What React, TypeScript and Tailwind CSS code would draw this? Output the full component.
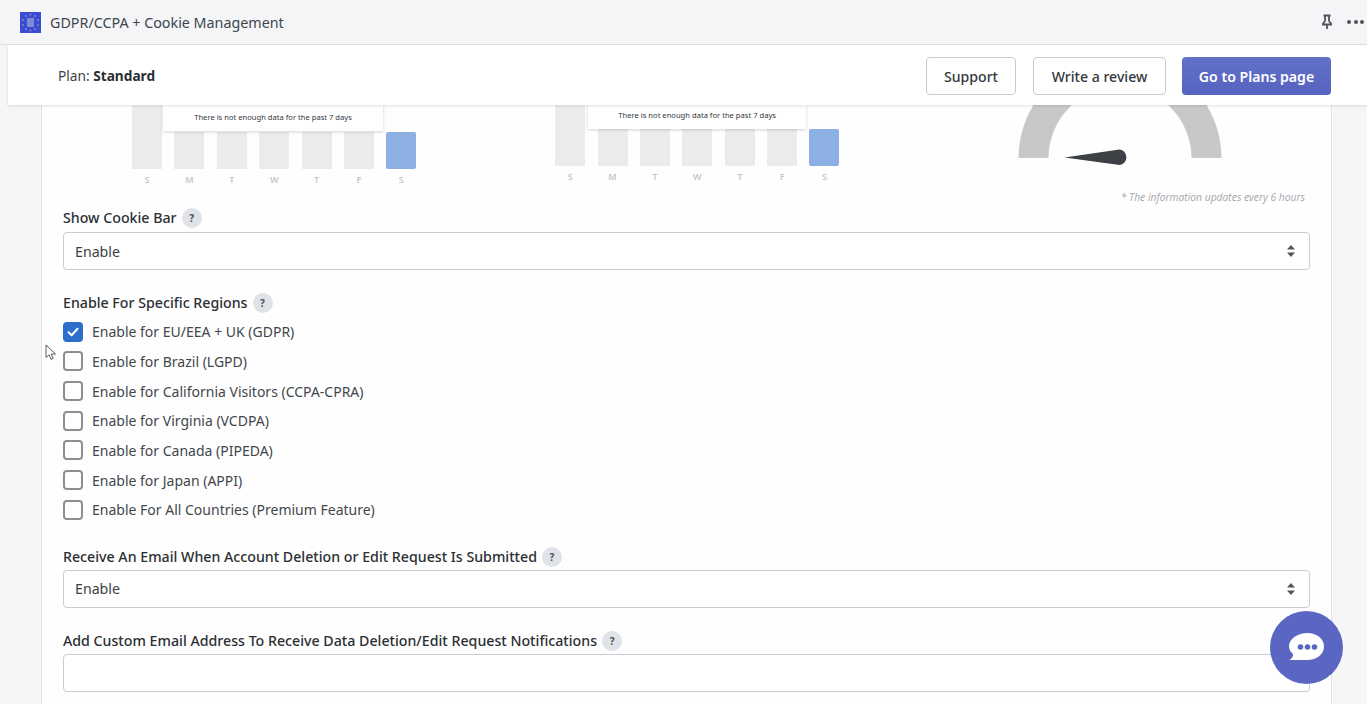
import React from "react";

const Help = () => (
  <span className="ml-[5px] flex h-[20px] w-[20px] items-center justify-center rounded-full bg-[#dfe3e8] text-[10px] font-bold leading-none text-[#454f5b]">?</span>
);

const Label = ({ children }: { children: React.ReactNode }) => (
  <div className="flex h-[20px] items-center text-[14.2px] font-medium text-[#2b2f33]">
    <span>{children}</span>
    <Help />
  </div>
);

const Arrows = () => (
  <svg width="8" height="12" viewBox="0 0 8 12" className="text-[#50555a]" fill="currentColor">
    <path d="M4 0 8 4.6H0z" />
    <path d="M4 12 0 7.4h8z" />
  </svg>
);

const Select = () => (
  <div className="flex h-[38px] items-center justify-between rounded-[4px] border border-[#c9ccd6] bg-white pl-[11px] pr-[14px] text-[14.2px] text-[#3a3f44]">
    <span className="pt-[1px]">Enable</span>
    <Arrows />
  </div>
);

const Check = ({ label, on }: { label: string; on?: boolean }) => (
  <div className="flex h-[29.67px] items-center text-[14px] text-[#42474c]">
    {on ? (
      <span className="flex h-[20px] w-[20px] items-center justify-center rounded-[4px] bg-[#2c6ecb]">
        <svg width="12" height="10" viewBox="0 0 12 10" fill="none" stroke="#fff" strokeWidth="2" strokeLinecap="round" strokeLinejoin="round">
          <path d="M1.5 5.2 4.6 8.2 10.5 1.8" />
        </svg>
      </span>
    ) : (
      <span className="h-[20px] w-[20px] rounded-[4px] border-2 border-[#8a8f94] bg-white" />
    )}
    <span className="ml-[9px]">{label}</span>
  </div>
);

const days = ["S", "M", "T", "W", "T", "F", "S"];

const Chart = ({ h, tip, shift }: { h: number; tip: string; shift: string }) => (
  <div className={`relative flex gap-[12.4px] ${shift}`}>
    {days.map((d, i) => (
      <div key={i} className="flex w-[30px] flex-col items-center">
        <div className="flex w-full flex-col justify-end" style={{ height: h }}>
          <div
            className={i === 6 ? "rounded-[2px] bg-[#8db0e4]" : "bg-[#ebebeb]"}
            style={{ height: i === 0 ? h : 37 }}
          />
        </div>
        <span className="mt-[6px] text-[9px] font-semibold leading-[10px] text-[#c6c6c6]">{d}</span>
      </div>
    ))}
    <div className={`absolute top-0 bg-white text-center text-[7.6px] text-[#33383d] shadow-[0_1px_3px_rgba(0,0,0,0.18)] ${tip}`}>
      There is not enough data for the past 7 days
    </div>
  </div>
);

const Gauge = () => (
  <svg width="204" height="62" viewBox="0 0 204 62" className="ml-[179px] block">
    <path d="M0.5 53A101.5 101.5 0 0 1 203.500 53H173.500A71.500 71.500 0 0 0 30.500 53z" fill="#c8c8c8" />
    <path d="M46.500 52.500 101.500 44.500A7.800 7.800 0 0 1 101.500 60z" fill="#3d4145" />
  </svg>
);

export default function App() {
  return (
    <div
      className="relative flex h-[704px] w-[1367px] flex-col overflow-hidden bg-[#f6f6f7]"
      style={{ fontFamily: '"Noto Sans", "Open Sans", sans-serif' }}
    >
      <header className="flex h-[45px] shrink-0 items-center border-b border-[#dfe1e5] bg-[#f5f5f7] pl-[20px] pr-[3px]">
        <svg width="21" height="21" viewBox="0 0 21 21">
          <rect width="21" height="21" fill="#3a4bd6" />
          <rect x="7" y="6" width="7" height="9" fill="#7f8bd6" />
          {[[10.5, 2.5], [15, 4], [18, 8], [18, 13], [15, 17], [10.5, 18.5], [6, 17], [3, 13], [3, 8], [6, 4]].map(([x, y], i) => (
            <circle key={i} cx={x} cy={y} r="0.9" fill="#8d8fb0" />
          ))}
        </svg>
        <span className="ml-[9px] pt-[1px] text-[14.3px] text-[#3c4650]">GDPR/CCPA + Cookie Management</span>
        <svg width="12" height="16" viewBox="0 0 12 16" fill="none" stroke="#50555a" strokeWidth="1.8" className="ml-auto">
          <path d="M2.500 1.500h7M4 1.500v5.500L2 9.500v1h8v-1L8 7V1.500M6 10.500V15" />
        </svg>
        <div className="ml-[14px] flex w-[17px] justify-between">
          <span className="h-[4px] w-[4px] rounded-full bg-[#50555a]" />
          <span className="h-[4px] w-[4px] rounded-full bg-[#50555a]" />
          <span className="h-[4px] w-[4px] rounded-full bg-[#50555a]" />
        </div>
      </header>

      <div className="relative z-10 ml-[8px] flex h-[60px] shrink-0 items-center bg-white pl-[50px] pr-[36px] pt-[2px] shadow-[0_1px_3px_rgba(0,0,0,0.12)]">
        <div className="pt-[1px] text-[13.7px] text-[#3f4448]">
          Plan: <b className="font-bold text-[#2b2f33]">Standard</b>
        </div>
        <div className="ml-auto flex h-[38px] items-stretch text-[14.1px] font-medium">
          <button className="w-[90px] rounded-[4px] border border-[#c4cdd5] bg-white pt-[1px] text-[#33383d]">Support</button>
          <button className="ml-[17px] w-[133px] rounded-[4px] border border-[#c4cdd5] bg-white pt-[1px] text-[#33383d]">Write a review</button>
          <button className="ml-[16px] w-[149px] rounded-[4px] bg-gradient-to-b from-[#6371c7] to-[#5563c1] pt-[1px] font-semibold text-white">Go to Plans page</button>
        </div>
      </div>

      <main className="ml-[41px] w-[1291px] flex-1 overflow-hidden border-x border-[#e3e4e9] bg-[#fefefe]">
        <div className="flex h-[85px] items-start overflow-hidden">
          <Chart h={64} tip="left-[31px] h-[26px] w-[220px] leading-[24px]" shift="ml-[90px]" />
          <Chart h={61} tip="left-[33px] h-[24px] w-[218px] leading-[20px]" shift="ml-[138.800px]" />
          <Gauge />
        </div>
        <div className="h-[14px] pr-[26px] text-right text-[10.3px] italic leading-[14px] text-[#a4a7ac]" style={{ fontFamily: '"Open Sans", sans-serif' }}>
          * The information updates every 6 hours
        </div>

        <div className="mt-[4px] px-[21px]">
          <Label>Show Cookie Bar</Label>
          <div className="mt-[4px]"><Select /></div>

          <div className="mt-[23px]"><Label>Enable For Specific Regions</Label></div>
          <div className="mt-[4px]">
            <Check on label="Enable for EU/EEA + UK (GDPR)" />
            <Check label="Enable for Brazil (LGPD)" />
            <Check label="Enable for California Visitors (CCPA-CPRA)" />
            <Check label="Enable for Virginia (VCDPA)" />
            <Check label="Enable for Canada (PIPEDA)" />
            <Check label="Enable for Japan (APPI)" />
            <Check label="Enable For All Countries (Premium Feature)" />
          </div>

          <div className="mt-[22px]"><Label>Receive An Email When Account Deletion or Edit Request Is Submitted</Label></div>
          <div className="mt-[3px]"><Select /></div>

          <div className="mt-[23px]"><Label>Add Custom Email Address To Receive Data Deletion/Edit Request Notifications</Label></div>
          <div className="mt-[3px] h-[38px] rounded-[4px] border border-[#c9ccd6] bg-white" />
        </div>
      </main>

      <svg width="14" height="18" viewBox="0 0 14 18" className="absolute left-[45px] top-[344px]" fill="#fff" stroke="#55595e" strokeWidth="1">
        <path d="M1 1v12.500l3-2.700 2 4.600 2.200-1-2-4.400h4.300z" />
      </svg>

      <div className="absolute left-[1270px] top-[611px] flex h-[73px] w-[73px] items-center justify-center rounded-full bg-[#5b66c2]">
        <svg width="35" height="30" viewBox="0 0 35 30" className="mt-[1px]">
          <path d="M18.500 0C27.500 0 35 5.500 35 13.500S27.500 27 18.500 27H0.500C3 25.500 4.500 23 4 21 1.500 18.500 0 16.500 0 13.500 0 5.500 9 0 18.500 0z" fill="#fff" />
          <circle cx="11.500" cy="14" r="2.800" fill="#5b66c2" />
          <circle cx="18.500" cy="14" r="2.800" fill="#5b66c2" />
          <circle cx="25.500" cy="14" r="2.800" fill="#5b66c2" />
        </svg>
      </div>
    </div>
  );
}
